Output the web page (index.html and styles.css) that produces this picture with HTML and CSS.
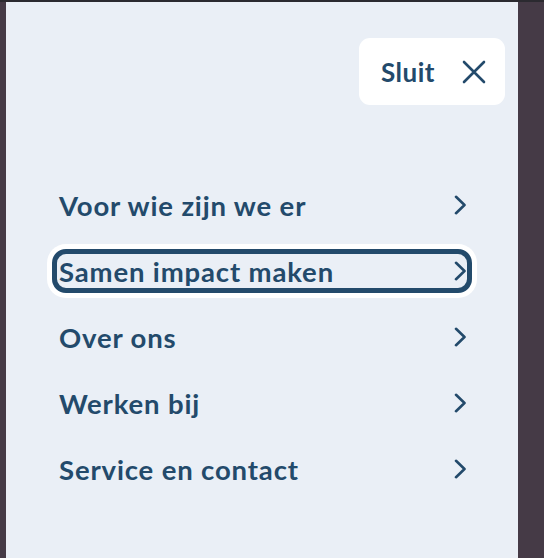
FILE: index.html
```html
<!DOCTYPE html>
<html lang="nl">
<head>
<meta charset="utf-8">
<link rel="stylesheet" href="styles.css">
</head>
<body>
<div class="topbar"></div>
<div class="page">
  <nav class="panel">
    <div class="head">
      <button class="close">
        <span>Sluit</span>
        <svg width="24" height="24" viewBox="0 0 24 24" fill="none" stroke="#234a6b" stroke-width="2.6" stroke-linecap="round"><path d="M2 2 L22 22 M22 2 L2 22"/></svg>
      </button>
    </div>
    <ul class="menu">
      <li><a class="item">Voor wie zijn we er<svg class="chev" width="12" height="20" viewBox="0 0 12 20" fill="none" stroke="#234a6b" stroke-width="2.6" stroke-linecap="round" stroke-linejoin="round"><path d="M2 1.8 L10.5 10 L2 18.2"/></svg></a></li>
      <li><a class="item focus">Samen impact maken<svg class="chev" width="12" height="20" viewBox="0 0 12 20" fill="none" stroke="#234a6b" stroke-width="2.6" stroke-linecap="round" stroke-linejoin="round"><path d="M2 1.8 L10.5 10 L2 18.2"/></svg></a></li>
      <li><a class="item">Over ons<svg class="chev" width="12" height="20" viewBox="0 0 12 20" fill="none" stroke="#234a6b" stroke-width="2.6" stroke-linecap="round" stroke-linejoin="round"><path d="M2 1.8 L10.5 10 L2 18.2"/></svg></a></li>
      <li><a class="item">Werken bij<svg class="chev" width="12" height="20" viewBox="0 0 12 20" fill="none" stroke="#234a6b" stroke-width="2.6" stroke-linecap="round" stroke-linejoin="round"><path d="M2 1.8 L10.5 10 L2 18.2"/></svg></a></li>
      <li><a class="item">Service en contact<svg class="chev" width="12" height="20" viewBox="0 0 12 20" fill="none" stroke="#234a6b" stroke-width="2.6" stroke-linecap="round" stroke-linejoin="round"><path d="M2 1.8 L10.5 10 L2 18.2"/></svg></a></li>
    </ul>
  </nav>
</div>
</body>
</html>
```
FILE: styles.css
```css
html, body {
  margin: 0;
  padding: 0;
  height: 100%;
}
body {
  background: #453a46;
  font-family: "Lato", "Noto Sans", sans-serif;
  overflow: hidden;
}
.topbar {
  height: 2px;
  background: #2b2a30;
}
.page {
  padding-left: 6px;
  height: 556px;
}
.panel {
  width: 512px;
  height: 100%;
  background: #eaeff6;
  box-sizing: border-box;
}
.head {
  display: flex;
  justify-content: flex-end;
  padding: 36px 13px 0 0;
}
.close {
  display: flex;
  align-items: center;
  justify-content: space-between;
  height: 67px;
  width: 146px;
  box-sizing: border-box;
  padding: 0 19px 0 22px;
  border: 0;
  border-radius: 11px;
  background: #ffffff;
  color: #234a6b;
  font-family: inherit;
  font-weight: 700;
  font-size: 26px;
  letter-spacing: 0.5px;
}
.menu {
  list-style: none;
  margin: 0;
  padding: 78px 0 0 46px;
  display: flex;
  flex-direction: column;
  gap: 22px;
}
.item {
  display: flex;
  align-items: center;
  justify-content: space-between;
  width: 420px;
  height: 44px;
  box-sizing: border-box;
  padding: 0 1px 0 2px;
  border: 5px solid transparent;
  border-radius: 14px;
  color: #234a6b;
  font-weight: 700;
  font-size: 27.5px;
  letter-spacing: 0.85px;
}
.item.focus {
  border-color: #234a6b;
  box-shadow: 0 0 0 5px #ffffff;
}
.chev {
  display: block;
}
```
